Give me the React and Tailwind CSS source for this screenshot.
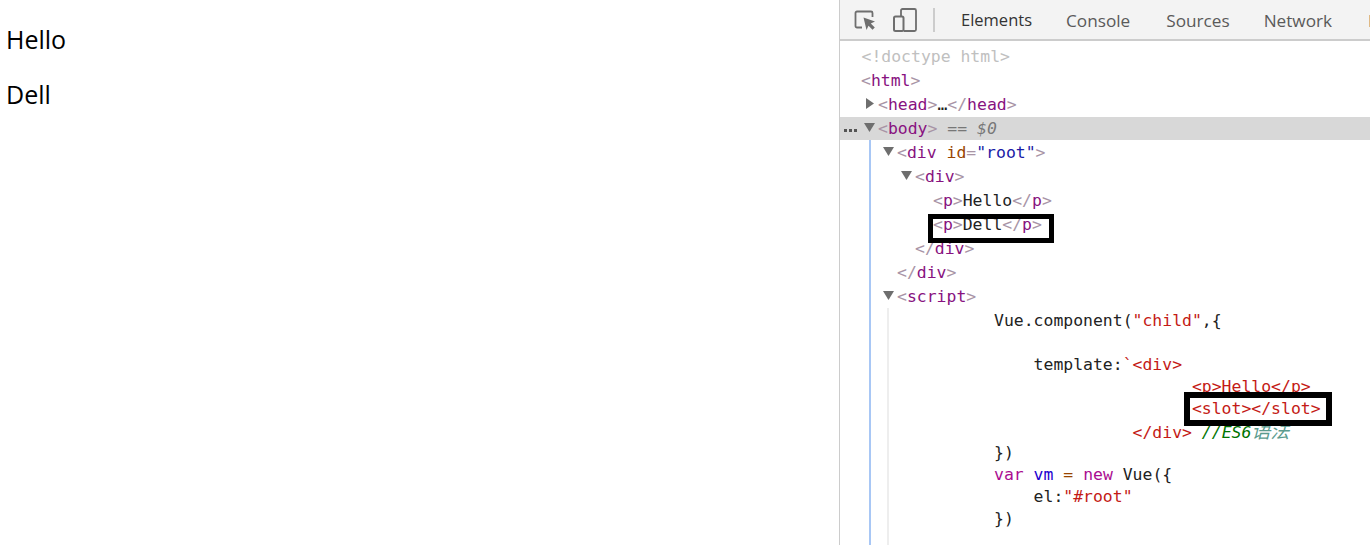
const B = ({ children }) => <span className="text-[#a894a6]">{children}</span>;
const N = ({ children }) => <span className="text-[#881280]">{children}</span>;
const R = ({ children }) => <span className="text-[#c41a16]">{children}</span>;
const Tag = ({ name, close }) => (
  <span>
    <B>{close ? "</" : "<"}</B>
    <N>{name}</N>
    <B>&gt;</B>
  </span>
);

const Down = () => (
  <span className="w-[14px] h-[24px] shrink-0 flex items-center">
    <svg width="11" height="9" viewBox="0 0 11 9" className="-mt-[2px]">
      <path d="M0 0H11L5.5 9Z" fill="#6e6e6e" />
    </svg>
  </span>
);
const Right = () => (
  <span className="w-[12px] h-[24px] shrink-0 flex items-center">
    <svg width="8" height="11" viewBox="0 0 8 11" className="-mt-[2px]">
      <path d="M0 0L8 5.5L0 11Z" fill="#6e6e6e" />
    </svg>
  </span>
);

const Row = ({ className = "", children }) => (
  <div className={`h-[24px] leading-[26px] flex whitespace-pre ${className}`}>{children}</div>
);
const Code = ({ children }) => <div className="h-[22px] leading-[22px] whitespace-pre">{children}</div>;

const Tab = ({ children, active, className = "" }) => (
  <div
    className={`h-[41px] flex items-center shrink-0 ${active ? "w-[107px] pl-[18px] pt-[2px] border-b-2 border-[#03a9f4] text-[#333333] text-[16.5px]" : "text-[#5a5a5a] text-[17.2px]"} ${className}`}
  >
    {children}
  </div>
);

export default function App() {
  return (
    <div className="h-[545px] w-full flex overflow-hidden bg-white font-['Open_Sans','Noto_Sans',sans-serif]">
      <div className="w-[839px] shrink-0 pl-[6px] pt-[24px] text-[25px] leading-[30px] text-black">
        <p>Hello</p>
        <p className="mt-[25px]">Dell</p>
      </div>

      <div className="relative flex-1 min-w-0 border-l border-[#cccccc] flex flex-col font-['DejaVu_Sans_Mono',monospace] text-[16.45px] text-[#222222]">
        <div className="h-[41px] shrink-0 bg-[#f3f3f3] border-b-2 border-[#cccccc] flex items-start overflow-hidden font-['Open_Sans','Noto_Sans',sans-serif]">
          <svg width="22" height="22" viewBox="0 0 22 22" className="ml-[14px] mt-[10px] shrink-0" fill="none">
            <path d="M8 17.5H3a1.5 1.5 0 0 1-1.500-1.500V3A1.500 1.500 0 0 1 3 1.500h14A1.500 1.500 0 0 1 18.500 3v4" stroke="#6e6e6e" strokeWidth="1.800" />
            <path d="M9.500 7.500L21 11.500l-4.200 2 4 4-2.300 2.300-4-4-2 4.200Z" fill="#6e6e6e" />
          </svg>
          <svg width="24" height="24" viewBox="0 0 24 24" className="ml-[17px] mt-[8px] shrink-0" fill="none">
            <path d="M8 8V2.500A1.500 1.500 0 0 1 9.500 1h12A1.500 1.500 0 0 1 23 2.500v19a1.500 1.500 0 0 1-1.500 1.500H11" stroke="#6e6e6e" strokeWidth="1.800" />
            <rect x="1" y="8.500" width="9.500" height="14.500" rx="1.500" stroke="#6e6e6e" strokeWidth="2" />
          </svg>
          <div className="w-[2px] h-[24px] ml-[16px] mt-[8px] bg-[#cccccc] shrink-0" />
          <Tab active className="ml-[8px]">Elements</Tab>
          <Tab className="ml-[16px]">Console</Tab>
          <Tab className="ml-[36px]">Sources</Tab>
          <Tab className="ml-[34px]">Network</Tab>
          <Tab className="ml-[36px]">Performance</Tab>
        </div>

        <div className="flex-1 min-h-0 flex flex-col pt-[3px]">
          <Row className="pl-[21.5px] text-[#c0c0c0]">{"<!doctype html>"}</Row>
          <Row className="pl-[21px]"><Tag name="html" /></Row>
          <Row className="pl-[26px]">
            <Right />
            <Tag name="head" />
            <span className="text-[#222222]">…</span>
            <Tag name="head" close />
          </Row>
          <div className="h-[23px] mt-px leading-[24px] bg-[#d8d8d8] flex items-center whitespace-pre">
            <span className="w-[24px] pl-[4px] shrink-0 flex gap-[2px] mt-[3px]">
              <span className="w-[3px] h-[3px] bg-[#555555]" />
              <span className="w-[3px] h-[3px] bg-[#555555]" />
              <span className="w-[3px] h-[3px] bg-[#555555]" />
            </span>
            <Down />
            <Tag name="body" />
            <span className="italic text-[#777777]">{" == $0"}</span>
          </div>

          <div className="flex-1 min-h-0 ml-[29px] border-l-2 border-[#a8c7f5] flex flex-col">
            <Row className="pl-[12px]">
              <Down />
              <span>
                <B>&lt;</B><N>div</N>{" "}
                <span className="text-[#994500]">id</span><B>=</B>
                <span className="text-[#1a1aa6]">"root"</span><B>&gt;</B>
              </span>
            </Row>
            <Row className="pl-[30px]"><Down /><Tag name="div" /></Row>
            <Row className="pl-[62px]"><Tag name="p" /><span>Hello</span><Tag name="p" close /></Row>
            <Row className="pl-[62px]"><Tag name="p" /><span>Dell</span><Tag name="p" close /></Row>
            <Row className="pl-[44px]"><Tag name="div" close /></Row>
            <Row className="pl-[26px]"><Tag name="div" close /></Row>
            <Row className="pl-[12px]"><Down /><Tag name="script" /></Row>

            <div className="flex-1 min-h-0 ml-[16px] border-l-2 border-[#eeeeee] pl-[105px] pt-[2px]">
              <Code>Vue.component(<R>"child"</R>,{"{"}</Code>
              <Code> </Code>
              <Code>{"    template:"}<R>{"`<div>"}</R></Code>
              <Code><R>{"                    <p>Hello</p>"}</R></Code>
              <Code><R>{"                    <slot></slot>"}</R></Code>
              <Code>
                <R>{"              </div>"}</R>{" "}
                <span className="italic text-[#007400]">//ES6</span>
                <span className="italic text-[19px] leading-[19px] text-[#5b9b8e] font-['Noto_Sans_CJK_SC',monospace]">语法</span>
              </Code>
              <Code>{"})"}</Code>
              <Code>
                <span className="text-[#aa0d91]">var</span>{" "}
                <span className="text-[#1c00cf]">vm</span>{" "}
                <span className="text-[#994500]">=</span>{" "}
                <span className="text-[#aa0d91]">new</span> Vue({"{"}
              </Code>
              <Code>{"    el:"}<R>"#root"</R></Code>
              <Code>{"})"}</Code>
            </div>
          </div>
        </div>

        <div className="absolute left-[88px] top-[214px] w-[126px] h-[29px] border-[5px] border-black" />
        <div className="absolute left-[344px] top-[392px] w-[148px] h-[34px] border-[6px] border-black" />
      </div>
    </div>
  );
}
